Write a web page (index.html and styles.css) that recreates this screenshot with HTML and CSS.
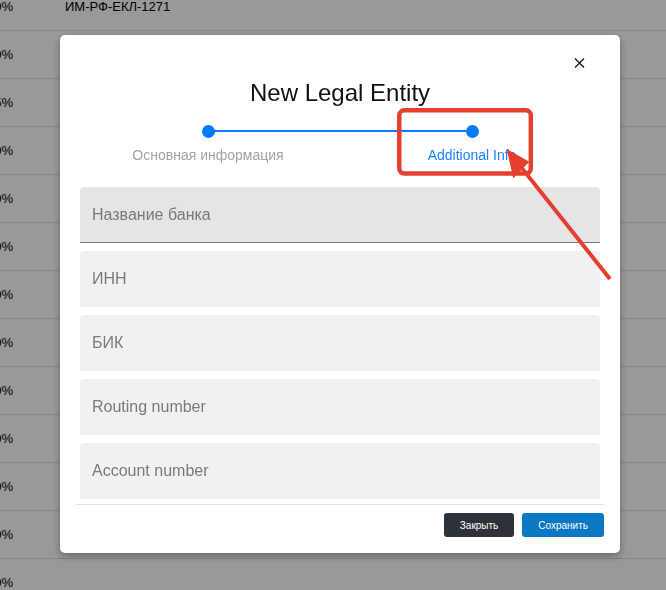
FILE: index.html
```html
<!DOCTYPE html>
<html lang="ru">
<head>
<meta charset="utf-8">
<title>New Legal Entity</title>
<link rel="stylesheet" href="styles.css">
</head>
<body>
<div class="page">
  <div class="row"><span class="pct">10%</span><span class="code">ИМ-РФ-ЕКЛ-1271</span></div>
  <div class="row"><span class="pct">10%</span></div>
  <div class="row"><span class="pct">15%</span></div>
  <div class="row"><span class="pct">10%</span></div>
  <div class="row"><span class="pct">10%</span></div>
  <div class="row"><span class="pct">10%</span></div>
  <div class="row"><span class="pct">10%</span></div>
  <div class="row"><span class="pct">10%</span></div>
  <div class="row"><span class="pct">10%</span></div>
  <div class="row"><span class="pct">10%</span></div>
  <div class="row"><span class="pct">10%</span></div>
  <div class="row"><span class="pct">10%</span></div>
  <div class="row"><span class="pct">10%</span></div>
</div>

<div class="backdrop"></div>

<div class="modal">
  <div class="modal-top">
    <button class="close" type="button" aria-label="Close">
      <svg width="11" height="10" viewBox="0 0 11 10"><path d="M1 0.5 L10 9.5 M10 0.5 L1 9.5" stroke="#1d1d1d" stroke-width="1.4" fill="none"/></svg>
    </button>
  </div>
  <h2 class="title">New Legal Entity</h2>
  <div class="stepper">
    <div class="track">
      <span class="spacer"></span>
      <span class="dot"></span>
      <span class="line"></span>
      <span class="dot"></span>
      <span class="spacer"></span>
    </div>
    <div class="labels">
      <span class="label">Основная информация</span>
      <span class="label active">Additional Info</span>
    </div>
  </div>
  <div class="body">
    <div class="field focused">Название банка</div>
    <div class="field">ИНН</div>
    <div class="field">БИК</div>
    <div class="field">Routing number</div>
    <div class="field">Account number</div>
    <div class="field">SWIFT</div>
  </div>
  <div class="footer">
    <button class="btn btn-dark" type="button">Закрыть</button>
    <button class="btn btn-primary" type="button">Сохранить</button>
  </div>
</div>

<svg class="annotation" width="666" height="590" viewBox="0 0 666 590">
  <rect x="399.3" y="110.3" width="131.5" height="63.2" rx="5" ry="5" fill="none" stroke="#e5402f" stroke-width="4.5"/>
  <line x1="610" y1="279" x2="521" y2="167" stroke="#e5402f" stroke-width="4"/>
  <polygon points="506.7,149 513.3,178.3 529.3,161.7" fill="#e5402f"/>
</svg>
</body>
</html>
```

FILE: styles.css
```css
html, body {
  margin: 0;
  padding: 0;
}
body {
  font-family: "Liberation Sans", Arial, sans-serif;
  background: #ffffff;
  overflow: hidden;
  width: 666px;
  height: 590px;
}
.page {
  margin-top: -17px;
}
.row {
  display: flex;
  align-items: center;
  height: 47px;
  border-bottom: 1px solid #dfe2e5;
  font-size: 13px;
  color: #000;
}
.pct {
  width: 13px;
  display: flex;
  justify-content: flex-end;
  white-space: nowrap;
  overflow: visible;
}
.code {
  margin-left: 52px;
}
.backdrop {
  position: fixed;
  inset: 0;
  background: rgba(0, 0, 0, 0.4);
}
.modal {
  position: fixed;
  left: 60px;
  top: 35px;
  width: 560px;
  height: 518px;
  background: #fff;
  border-radius: 5px;
  box-shadow: 0 3px 9px rgba(0, 0, 0, 0.35);
  display: flex;
  flex-direction: column;
  box-sizing: border-box;
}
.modal-top {
  display: flex;
  justify-content: flex-end;
  padding: 20px 33px 0 20px;
}
.close {
  width: 16px;
  height: 16px;
  padding: 0;
  border: 0;
  background: transparent;
  display: flex;
  align-items: center;
  justify-content: center;
}
.title {
  margin: 8px 0 0;
  font-size: 24px;
  line-height: 28px;
  font-weight: 400;
  color: #111;
  text-align: center;
}
.stepper {
  margin: 18px auto 0;
  width: 528px;
}
.track {
  display: flex;
  align-items: center;
  height: 12px;
}
.spacer {
  width: 126px;
  flex: none;
}
.dot {
  width: 13px;
  height: 13px;
  border-radius: 50%;
  background: #007bff;
  flex: none;
  margin: 0 -0.5px;
}
.line {
  flex: 1;
  height: 2px;
  background: #007bff;
}
.labels {
  display: grid;
  grid-template-columns: 1fr 1fr;
  margin-top: 10px;
}
.label {
  text-align: center;
  font-size: 14px;
  line-height: 16px;
  color: #a3a3a3;
  white-space: nowrap;
}
.label.active {
  color: #1a82ff;
}
.body {
  flex: 1;
  margin-top: 24px;
  padding: 0 20px;
  overflow: hidden;
  display: flex;
  flex-direction: column;
  gap: 8px;
}
.field {
  flex: none;
  height: 56px;
  box-sizing: border-box;
  background: #f1f1f1;
  border-radius: 4px 4px 0 0;
  padding-left: 12px;
  display: flex;
  align-items: center;
  font-size: 16px;
  color: #7a7a7a;
}
.field.focused {
  background: #e5e5e5;
  border-bottom: 1px solid #7b7b7b;
}
.footer {
  margin: 0 16px;
  border-top: 1px solid #dee2e6;
  padding: 8px 0 16px;
  display: flex;
  justify-content: flex-end;
  gap: 8px;
}
.btn {
  height: 24px;
  padding: 0 16px;
  border: 0;
  border-radius: 3px;
  font-family: "Liberation Sans", Arial, sans-serif;
  font-size: 10px;
  color: #fff;
}
.btn-dark {
  background: #2c3238;
}
.btn-primary {
  background: #0a78c2;
}
.annotation {
  position: fixed;
  left: 0;
  top: 0;
  pointer-events: none;
}
```
